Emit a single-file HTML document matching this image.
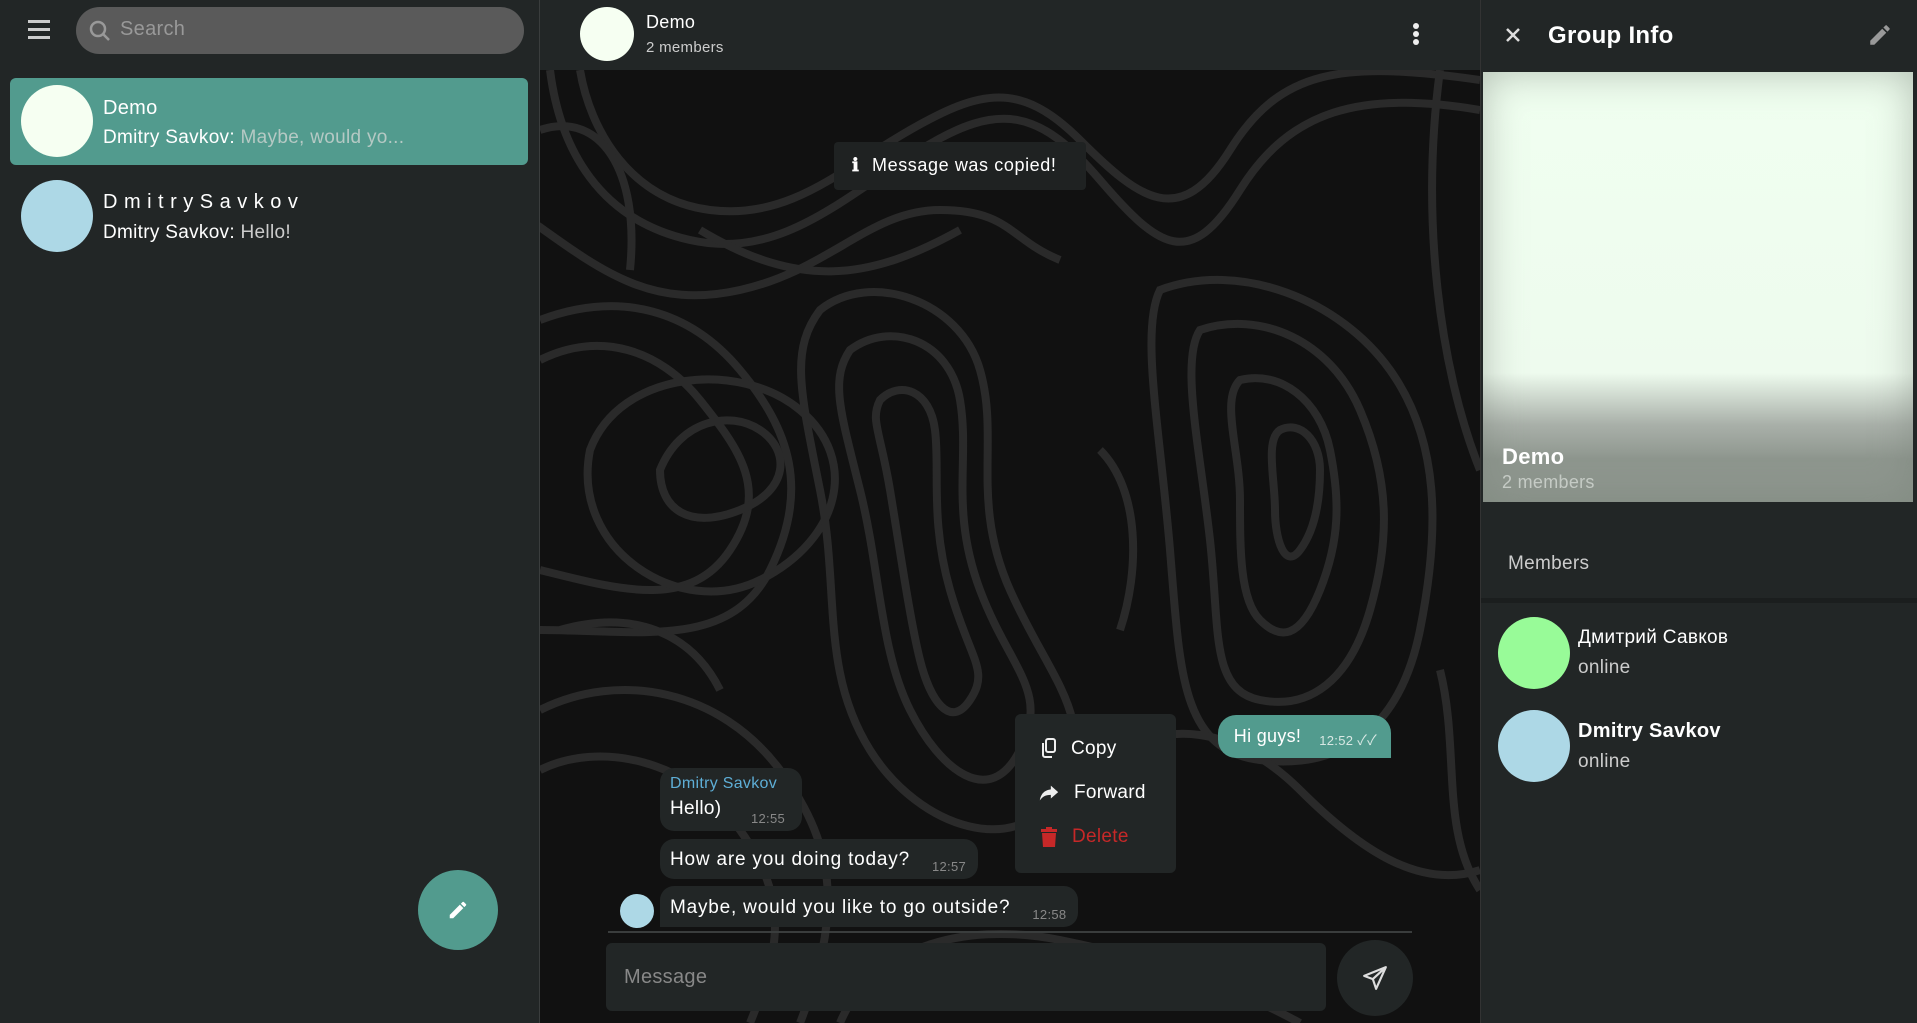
<!DOCTYPE html>
<html><head><meta charset="utf-8"><style>
*{box-sizing:border-box;margin:0;padding:0}
body{width:1917px;height:1023px;overflow:hidden;background:#222626;font-family:"Liberation Sans","Noto Sans CJK SC",sans-serif;color:#fff;position:relative;letter-spacing:0.3px}
.abs{position:absolute}
.left{left:0;top:0;width:540px;height:1023px;background:#222626;border-right:1px solid #3a3d3d}
.mid{left:540px;top:0;width:940px;height:1023px;background:#111}
.right{left:1480px;top:0;width:437px;height:1023px;background:#222626;border-left:1px solid #333}
.circ{border-radius:50%;position:absolute}
.t{position:absolute;white-space:nowrap}
.msg{position:absolute;background:#222626;border-radius:14px;padding:0 12px 0 10px;white-space:nowrap;font-size:19px;display:flex;align-items:flex-end}
.msg .tm{font-size:13px;color:#888;margin-left:22px;margin-bottom:2px}
</style></head><body>
<div class="abs left">
  <div class="abs" style="left:28px;top:20px;width:22px;height:3px;background:#ccc;box-shadow:0 8px 0 #ccc,0 16px 0 #ccc"></div>
  <div class="abs" style="left:76px;top:7px;width:448px;height:47px;border-radius:24px;background:#5a5a5a"></div>
  <svg class="abs" style="left:88px;top:19px" width="24" height="24" viewBox="0 0 24 24"><circle cx="10" cy="10" r="7" fill="none" stroke="#999" stroke-width="2.5"/><path d="M15 15l6 6" stroke="#999" stroke-width="2.5"/></svg>
  <div class="t" style="left:120px;top:18px;font-size:20px;color:#999">Search</div>
  <div class="abs" style="left:10px;top:78px;width:518px;height:87px;border-radius:6px;background:#529b8e"></div>
  <div class="circ" style="left:21px;top:85px;width:72px;height:72px;background:#f6fff2"></div>
  <div class="t" style="left:103px;top:97px;font-size:20px">Demo</div>
  <div class="t" style="left:103px;top:127px;font-size:19px">Dmitry Savkov: <span style="color:#b5c9c4">Maybe, would yo...</span></div>
  <div class="circ" style="left:21px;top:180px;width:72px;height:72px;background:#add8e6"></div>
  <div class="t" style="left:103px;top:191px;font-size:20px;letter-spacing:6.5px">DmitrySavkov</div>
  <div class="t" style="left:103px;top:222px;font-size:19px">Dmitry Savkov: <span style="color:#ccc">Hello!</span></div>
  <div class="circ" style="left:418px;top:870px;width:80px;height:80px;background:#529b8e"></div>
  <svg class="abs" style="left:447px;top:899px" width="22" height="22" viewBox="0 0 24 24"><path d="M3 17.25V21h3.75L17.8 9.94l-3.75-3.75L3 17.25zM20.7 7.04a1 1 0 000-1.41l-2.34-2.34a1 1 0 00-1.41 0l-1.83 1.83 3.75 3.75 1.83-1.83z" fill="#fff"/></svg>
</div>
<div class="abs mid">
  <svg class="abs" style="left:0;top:70px" width="940" height="953" viewBox="0 0 940 953" fill="none" stroke="#2a2a2a" stroke-width="8">
    <path d="M10 0C20 80 60 150 150 170S300 130 380 80 500 40 560 110 650 200 700 120 820 20 940 40"/>
    <path d="M40 0C50 60 90 130 170 140S300 100 370 60 480 10 540 70 640 160 690 80 800 -10 940 10"/>
    <path d="M-10 150C60 200 110 240 200 220S330 140 400 140 470 170 520 190"/>
    <path d="M0 290C60 260 120 280 160 330S230 420 190 480 80 520 0 500"/>
    <path d="M0 250C80 220 150 240 200 300S270 420 230 500 100 560 0 560"/>
    <path d="M160 160C260 220 330 210 420 160"/>
    <path d="M120 400C140 350 190 340 220 360S250 420 200 440 120 440 120 400Z"/>
    <path d="M50 380C80 300 200 290 260 340S300 470 220 510 30 480 50 380Z"/>
    <path d="M280 240C330 200 420 230 440 300S430 430 470 520 560 650 520 720 380 760 330 680 300 520 280 420 250 280 280 240Z"/>
    <path d="M310 280C350 250 410 270 420 330S410 440 440 520 510 620 480 680 400 700 370 640 340 500 320 420 290 310 310 280Z"/>
    <path d="M340 330C360 310 390 320 395 360S390 450 410 520 450 600 430 630 390 630 380 590 360 480 350 420 330 350 340 330Z"/>
    <path d="M620 220C700 190 800 230 850 300S900 460 880 560 800 700 720 690 640 600 630 480 600 260 620 220Z"/>
    <path d="M660 260C720 240 790 270 820 340S850 470 830 540 770 640 720 630 680 560 670 470 640 290 660 260Z"/>
    <path d="M700 310C740 300 780 330 790 380S800 470 780 520 740 570 720 550 700 480 700 430 680 330 700 310Z"/>
    <path d="M740 360C760 350 780 370 780 400S775 460 760 480 735 470 735 440 725 370 740 360Z"/>
    <path d="M900 0C880 150 900 300 940 400"/>
    <path d="M0 640C80 600 180 620 240 700S300 850 260 953"/>
    <path d="M0 700C60 670 150 690 200 760S240 880 210 953"/>
    <path d="M300 953C330 880 420 850 520 870S700 920 760 953"/>
    <path d="M560 700C620 640 700 660 760 720S880 820 940 800"/>
    <path d="M900 600C920 680 900 760 940 820"/>
    <path d="M20 560C90 540 150 560 180 620"/>
    <path d="M0 60C60 40 100 100 90 200"/>
    <path d="M560 380C600 420 600 500 580 560"/>
  </svg>
  <div class="abs" style="left:0;top:0;width:940px;height:70px;background:#222626"></div>
  <div class="circ" style="left:40px;top:7px;width:54px;height:54px;background:#f6fff2"></div>
  <div class="t" style="left:106px;top:12px;font-size:18px">Demo</div>
  <div class="t" style="left:106px;top:39px;font-size:15px;color:#ccc">2 members</div>
  <div class="circ" style="left:873px;top:23px;width:6px;height:6px;background:#eee;box-shadow:0 8px 0 #eee,0 16px 0 #eee"></div>
  <div class="abs" style="left:294px;top:142px;width:252px;height:48px;background:#1f2222;border-radius:4px"></div>
  <div class="t" style="left:312px;top:155px;font-size:18px;font-weight:bold">&#8505;</div>
  <div class="t" style="left:332px;top:155px;font-size:18px;letter-spacing:0.6px">Message was copied!</div>

  <div class="msg" style="right:89px;top:715px;height:43px;background:#529b8e;border-radius:18px 18px 0 18px;padding:0 14px 0 16px;align-items:center">
    <span style="font-size:18px">Hi guys!</span><span style="font-size:13px;color:#d8e8e4;margin:8px 0 0 18px">12:52</span><span style="font-size:14px;color:#d8e8e4;margin:6px 0 0 4px">&#10003;&#10003;</span>
  </div>

  <div class="abs" style="left:120px;top:768px;width:142px;height:63px;border-radius:14px;background:#222626"></div>
  <div class="t" style="left:130px;top:775px;font-size:16px;color:#5eaed6">Dmitry Savkov</div>
  <div class="t" style="left:130px;top:798px;font-size:19px">Hello)</div>
  <div class="t" style="left:211px;top:811px;font-size:13px;color:#888">12:55</div>

  <div class="msg" style="left:120px;top:839px;height:40px;padding-bottom:8px"><span style="letter-spacing:0.8px">How are you doing today?</span><span class="tm" style="margin-bottom:-3px">12:57</span></div>
  <div class="msg" style="left:120px;top:886px;height:41px;border-radius:14px 14px 14px 0;padding-bottom:8px"><span style="letter-spacing:0.8px">Maybe, would you like to go outside?</span><span class="tm" style="margin-bottom:-3px">12:58</span></div>
  <div class="circ" style="left:80px;top:894px;width:34px;height:34px;background:#add8e6"></div>

  <div class="abs" style="left:475px;top:714px;width:161px;height:159px;background:#222626;border-radius:6px"></div>
  <svg class="abs" style="left:499px;top:737px" width="20" height="22" viewBox="0 0 20 22" fill="none" stroke="#eee" stroke-width="2"><rect x="7" y="2" width="9" height="13" rx="2"/><path d="M4 6v12a2 2 0 002 2h7"/></svg>
  <div class="t" style="left:531px;top:738px;font-size:19px">Copy</div>
  <svg class="abs" style="left:498px;top:782px" width="22" height="22" viewBox="0 0 24 24"><path d="M14 4l8 7-8 7v-4c-6 0-9 2-12 6 1-6 4-11 12-12V4z" fill="#eee"/></svg>
  <div class="t" style="left:534px;top:782px;font-size:19px">Forward</div>
  <svg class="abs" style="left:499px;top:826px" width="20" height="22" viewBox="0 0 20 22"><path d="M2 3h16v3H2zM7 1h6v2H7zM3 7h14l-1 14H4z" fill="#c62828"/></svg>
  <div class="t" style="left:532px;top:826px;font-size:19px;color:#c62828">Delete</div>
  <div class="abs" style="left:68px;top:931px;width:804px;height:2px;background:#3a3d3d"></div>
  <div class="abs" style="left:66px;top:943px;width:720px;height:68px;background:#222626;border-radius:6px"></div>
  <div class="t" style="left:84px;top:966px;font-size:20px;color:#888">Message</div>
  <div class="circ" style="left:797px;top:940px;width:76px;height:76px;background:#222626"></div>
  <svg class="abs" style="left:822px;top:965px" width="26" height="26" viewBox="0 0 24 24" fill="none" stroke="#ddd" stroke-width="2" stroke-linejoin="round"><path d="M22 2L2 10l8 3 3 9 9-20zM10 13l12-11"/></svg>
</div>
<div class="abs right">
  <svg class="abs" style="left:24px;top:27px" width="16" height="16" viewBox="0 0 16 16" stroke="#ddd" stroke-width="2.5"><path d="M2 2l12 12M14 2L2 14"/></svg>
  <div class="t" style="left:67px;top:22px;font-size:24px;font-weight:bold">Group Info</div>
  <svg class="abs" style="left:386px;top:22px" width="26" height="26" viewBox="0 0 24 24"><path d="M3 17.25V21h3.75L17.8 9.94l-3.75-3.75L3 17.25zM20.7 7.04a1 1 0 000-1.41l-2.34-2.34a1 1 0 00-1.41 0l-1.83 1.83 3.75 3.75 1.83-1.83z" fill="#999"/></svg>
  <div class="abs" style="left:2px;top:72px;width:430px;height:430px;background:linear-gradient(to bottom,#f0fff0 0%,#eefbee 70%,#a9b0a9 82%,#8e968e 90%,#8e968e 100%);box-shadow:inset 0 0 40px rgba(120,130,120,.5)"></div>
  <div class="t" style="left:21px;top:444px;font-size:22px;font-weight:bold">Demo</div>
  <div class="t" style="left:21px;top:472px;font-size:18px;color:#c5cbc5">2 members</div>
  <div class="t" style="left:27px;top:553px;font-size:19px;color:#ccc">Members</div>
  <div class="abs" style="left:0;top:598px;width:437px;height:5px;background:#1b1e1e"></div>
  <div class="circ" style="left:17px;top:617px;width:72px;height:72px;background:#98fb98"></div>
  <div class="t" style="left:97px;top:627px;font-size:19px">Дмитрий Савков</div>
  <div class="t" style="left:97px;top:657px;font-size:19px;color:#ccc">online</div>
  <div class="circ" style="left:17px;top:710px;width:72px;height:72px;background:#add8e6"></div>
  <div class="t" style="left:97px;top:720px;font-size:20px;font-weight:bold">Dmitry Savkov</div>
  <div class="t" style="left:97px;top:751px;font-size:19px;color:#ccc">online</div>
</div>
</body></html>
